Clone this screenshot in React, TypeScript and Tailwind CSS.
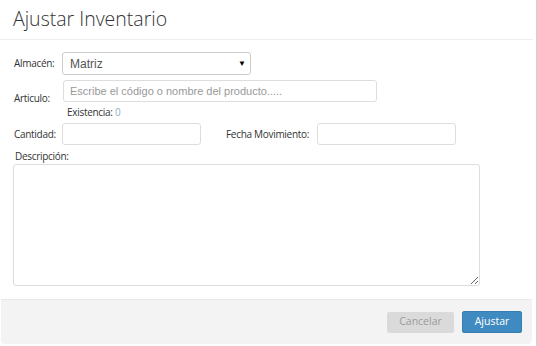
export default function App() {
  return (
    <div className="flex h-[346px] w-[537px] bg-white" style={{ fontFamily: '"Open Sans", sans-serif' }}>
      {/* Modal */}
      <div className="flex w-[533px] flex-col">
        {/* Header */}
        <div className="h-[40px] border-b border-[#eeeeee] pl-[13px] pt-[5px]">
          <h1 className="text-[19.5px] font-light leading-[27px] text-[#333333]">Ajustar Inventario</h1>
        </div>

        {/* Body */}
        <div className="flex flex-col pl-[14px] text-[10px] tracking-[-0.3px] text-[#333333]">
          <div className="mt-[12px] flex items-center">
            <span className="w-[48px]">Almacén:</span>
            <div
              className="flex h-[23px] w-[189px] items-center justify-between rounded-[3px] border border-[#cccccc] pl-[7px] pr-[4px] text-[12px] tracking-normal text-[#555555]"
              style={{ fontFamily: '"Liberation Sans", Arial, sans-serif' }}
            >
              <span>Matriz</span>
              <span className="text-[8px] text-black">▼</span>
            </div>
          </div>

          <div className="mt-[5px] flex items-start">
            <span className="mt-[12px] w-[49px] leading-[13px]">Articulo:</span>
            <input
              className="h-[22px] w-[314px] rounded-[3px] border border-[#dddddd] px-[6px] text-[11px] tracking-normal text-[#555555] placeholder:text-[#999999] focus:outline-none"
              style={{ fontFamily: '"Liberation Sans", Arial, sans-serif' }}
              placeholder="Escribe el código o nombre del producto....."
            />
          </div>

          <div className="pl-[53px] leading-[15px]">
            Existencia: <span className="text-[#8fb0c0]">0</span>
          </div>

          <div className="mt-[3px] flex items-center">
            <span className="w-[48px]">Cantidad:</span>
            <input className="h-[22px] w-[139px] rounded-[3px] border border-[#dddddd] focus:outline-none" />
            <span className="ml-[25px] w-[91px]">Fecha Movimiento:</span>
            <input className="h-[22px] w-[139px] rounded-[3px] border border-[#dddddd] focus:outline-none" />
          </div>

          <div className="mt-[4px] pl-[1px] leading-[15px]">Descripción:</div>

          <textarea className="ml-[-1px] h-[122px] w-[467px] rounded-[3px] border border-[#dddddd] focus:outline-none" />
        </div>

        {/* Footer */}
        <div className="mx-[1px] mt-[13px] flex h-[45px] items-center justify-end gap-[8px] rounded-b-[4px] border-t border-[#e8e8e8] bg-[#f3f3f3] pr-[10px]">
          <button className="h-[21px] w-[67px] rounded-[2px] bg-[#dadada] text-[10.5px] text-[#9a9a9a]">Cancelar</button>
          <button className="h-[22px] w-[60px] rounded-[2px] border border-[#357fb5] bg-[#3f8bc1] text-[10.5px] text-white">Ajustar</button>
        </div>
      </div>
      <div className="ml-auto w-px bg-[#d0d0d0]" />
    </div>
  );
}
